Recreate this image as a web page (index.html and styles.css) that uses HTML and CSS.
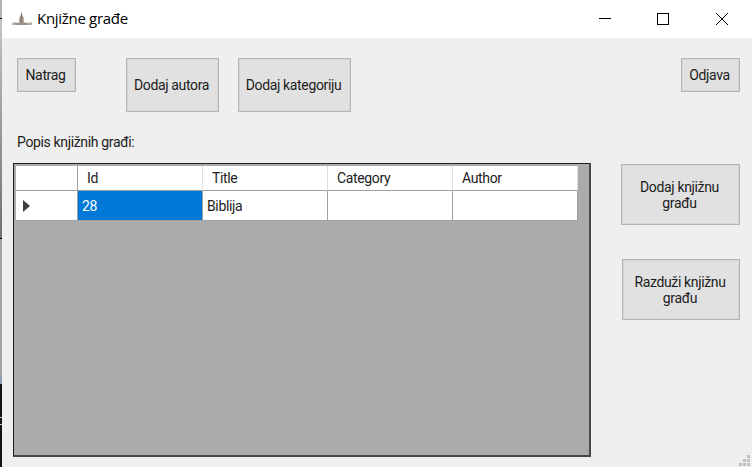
FILE: index.html
```html
<!DOCTYPE html>
<html lang="hr">
<head>
<meta charset="utf-8">
<title>Knjižne građe</title>
<link rel="stylesheet" href="styles.css">
</head>
<body>
<div class="desktop">
  <div class="edge"><i class="edge-cap"></i><i class="edge-top"></i><i class="edge-mid"></i><i class="edge-low"></i></div>
  <main class="window">
    <header class="titlebar">
      <svg class="app-icon" width="22" height="18" viewBox="0 0 22 18">
        <path d="M1 13L4 12L7 13L8 12V8L9.500 6L10.500 1.500L11.500 6L13 8V12L16 13L21 12V15H1Z" fill="#b9b0a8"/>
        <path d="M9.500 7L10.500 2L11.500 7V13H9.500ZM4 13.500H17V14.500H4Z" fill="#85766b"/>
      </svg>
      <h1 class="title">Knjižne građe</h1>
      <svg class="controls" width="130" height="12" viewBox="0 0 130 12" fill="none" stroke="#000" shape-rendering="crispEdges">
        <path d="M0 5.5H12M58.500 .5H69.500V11.500H58.500Z"/>
        <path d="M117 0L129 12M129 0L117 12" shape-rendering="auto"/>
      </svg>
    </header>
    <div class="toolbar">
      <button class="btn back">Natrag</button>
      <button class="btn add-author">Dodaj autora</button>
      <button class="btn add-category">Dodaj kategoriju</button>
      <button class="btn logout">Odjava</button>
    </div>
    <p class="caption">Popis knjižnih građi:</p>
    <div class="content">
      <section class="listing">
        <div class="grid">
          <div class="head corner"></div><div class="head">Id</div><div class="head">Title</div><div class="head">Category</div><div class="head">Author</div>
          <div class="cell marker"><svg width="7" height="12" viewBox="0 0 7 12"><path d="M0 0L7 6L0 12Z" fill="#404040"/></svg></div><div class="cell selected">28</div><div class="cell">Biblija</div><div class="cell"></div><div class="cell"></div>
        </div>
      </section>
      <aside class="actions">
        <button class="btn wide">Dodaj knjižnu<br>građu</button>
        <button class="btn wide second">Razduži knjižnu<br>građu</button>
      </aside>
    </div>
    <svg class="grip" width="11" height="11" viewBox="0 0 11 11" fill="#bfbfbf"><path d="M8 0h3v3h-3zM4 4h3v3h-3zM8 4h3v3h-3zM0 8h3v3h-3zM4 8h3v3h-3zM8 8h3v3h-3z"/></svg>
  </main>
</div>
</body>
</html>
```
FILE: styles.css
```css
* { box-sizing: border-box; }
body { margin: 0; overflow: hidden; font: 14px/16px Roboto, "Liberation Sans", sans-serif; letter-spacing: -.35px; color: #1c1c1c; }
.desktop { display: flex; width: 752px; height: 467px; }
.edge { display: flex; flex-direction: column; width: 2px; }
.edge-cap { height: 19px; background: #b4b4b4; border-bottom: 1px solid #000; }
.edge-top { height: 220px; background: linear-gradient(#c4c4c4, #707070); border-bottom: 1px solid #000; }
.edge-mid { height: 145px; background: linear-gradient(#a3a3a3 94%, #8d9bb0 94%); }
.edge-low { flex: 1; background: linear-gradient(#151515 33px, #c8c8c8 33px, #c8c8c8 34px, #151515 34px, #151515 40px, #c8c8c8 40px, #c8c8c8 41px, #151515 41px); }
.window { position: relative; width: 750px; background: #efefef; }
.titlebar { display: flex; align-items: center; height: 38px; padding: 0 23px 0 9px; background: #fff; }
.title { margin: -2px 0 0 4px; font: 15px/20px "Open Sans", sans-serif; letter-spacing: -.3px; color: #000; }
.controls { margin-left: auto; }
.toolbar { display: flex; align-items: flex-start; height: 94px; padding: 20px 12px 0 15px; }
.btn { padding: 0 2px 0 0; border: 1px solid #b4b4b4; background: #e1e1e1; font: inherit; letter-spacing: inherit; color: inherit; white-space: nowrap; box-shadow: inset 0 0 0 1px #d7d7d7; }
.back { width: 59px; height: 34px; }
.add-author { width: 93px; height: 54px; margin-left: 50px; }
.add-category { width: 113px; height: 54px; margin-left: 19px; }
.logout { width: 59px; height: 34px; margin-left: auto; }
.caption { margin: 0; height: 31px; padding: 2px 0 0 15px; }
.content { display: flex; justify-content: space-between; padding: 0 12px 0 11px; }
.listing { width: 578px; height: 294px; padding: 2px 0 0 2px; border: 1px solid #202020; border-right: 2px solid #484848; border-bottom: 2px solid #484848; background: #ababab; }
.grid { display: grid; grid-template-columns: 62px repeat(4, 125px); grid-template-rows: 25px 30px; width: 562px; }
.head { padding: 4px 0 0 9px; border-right: 1px solid #e0e0e0; border-bottom: 1px solid #a0a0a0; background: #fff; }
.corner { border-right-color: #a0a0a0; }
.cell { display: flex; align-items: center; padding-left: 4px; border-right: 1px solid #a0a0a0; border-bottom: 1px solid #a0a0a0; background: #fff; }
.marker { padding-left: 7px; }
.selected { background: #0078d7; color: #fff; }
.actions { display: flex; flex-direction: column; align-items: flex-end; padding-top: 1px; }
.wide { width: 119px; height: 61px; }
.second { width: 118px; margin-top: 34px; }
.grip { position: absolute; right: 2px; bottom: 1px; }
```
